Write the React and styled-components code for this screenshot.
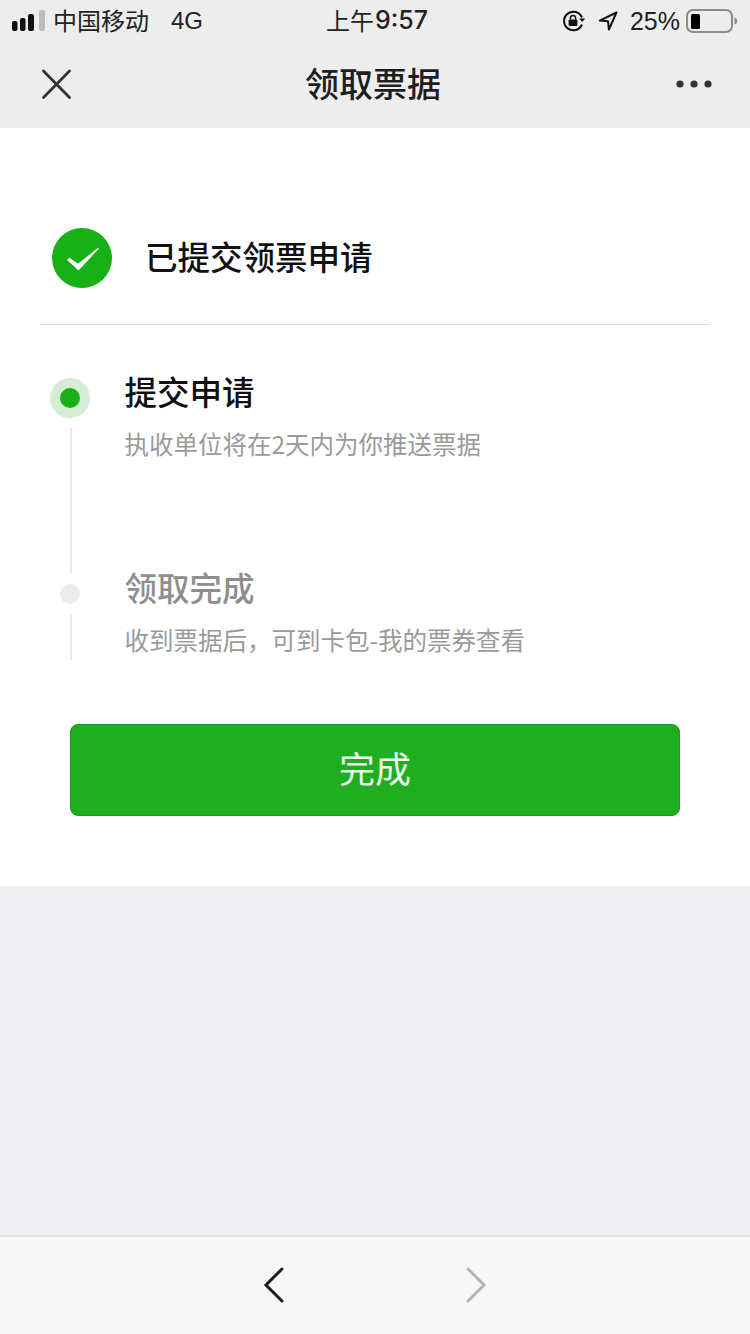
import React from "react";
import styled, { createGlobalStyle } from "styled-components";

const LATIN_FIRST = `"Liberation Sans", "Noto Sans CJK SC", sans-serif`;
const CJK = `"Noto Sans CJK SC", "Liberation Sans", sans-serif`;

const GlobalStyle = createGlobalStyle`
  html, body {
    margin: 0;
    padding: 0;
    background: #efeff1;
    font-family: ${CJK};
  }
`;

const Page = styled.div`
  width: 750px;
  height: 1334px;
  display: flex;
  flex-direction: column;
  overflow: hidden;
`;

const Header = styled.header`
  height: 128px;
  flex: none;
  background: #ededed;
`;

const StatusBar = styled.div`
  height: 42px;
  padding: 0 7px 0 12px;
  display: grid;
  grid-template-columns: 1fr auto 1fr;
  align-items: center;
  color: #222;
  font-size: 24px;
  line-height: 42px;
`;

const StatusLeft = styled.div`
  display: flex;
  align-items: center;
`;

const Carrier = styled.span`
  margin-left: 7px;
  padding-bottom: 2px;
  line-height: 34px;
`;

const Network = styled.span`
  margin-left: 22px;
  font-family: ${LATIN_FIRST};
`;

const Time = styled.div`
  display: flex;
  align-items: center;
  line-height: 36px;
  padding-bottom: 2px;
  margin-left: -1px;
`;

const Clock = styled.span`
  font-family: Inter, "Liberation Sans", sans-serif;
  font-size: 25px;
  font-weight: 500;
  margin-left: 1px;
`;

const StatusRight = styled.div`
  display: flex;
  align-items: center;
  justify-content: flex-end;
  padding-right: 5px;
`;

const Percent = styled.span`
  font-family: ${LATIN_FIRST};
  font-size: 25px;
  margin: 0 6px 0 12px;
`;

const ArrowSvg = styled.svg`
  margin-left: 12px;
`;

const NavBar = styled.div`
  height: 86px;
  padding: 0 36px 0 32px;
  display: grid;
  grid-template-columns: 1fr auto 1fr;
  align-items: center;
`;

const NavTitle = styled.h1`
  margin: 0;
  padding-bottom: 4px;
  font-size: 34px;
  line-height: 44px;
  font-weight: 500;
  color: #1e1e1e;
`;

const NavEnd = styled.div`
  display: flex;
  justify-content: ${(p) => (p.$right ? "flex-end" : "flex-start")};
`;

const Content = styled.main`
  flex: none;
  background: #fff;
  padding: 100px 40px 70px;
`;

const Result = styled.div`
  display: flex;
  align-items: center;
  height: 60px;
  padding-left: 12px;
  padding-bottom: 36px;
  border-bottom: 1px solid #d9d9d9;
`;

const ResultText = styled.h2`
  margin: 0 0 4px 33px;
  font-size: 32.5px;
  line-height: 58px;
  font-weight: 500;
  color: #111;
`;

const Steps = styled.ol`
  list-style: none;
  margin: 53px 0 0;
  padding: 0 0 0 10px;
`;

const Step = styled.li`
  display: flex;
`;

const Rail = styled.div`
  width: 40px;
  flex: none;
  display: flex;
  flex-direction: column;
  align-items: center;
`;

const Marker = styled.span`
  width: 40px;
  height: 40px;
  flex: none;
  display: flex;
  align-items: center;
  justify-content: center;
  border-radius: 50%;
  background: ${(p) => (p.$active ? "#d5edd5" : "transparent")};

  &::after {
    content: "";
    width: 20px;
    height: 20px;
    border-radius: 50%;
    background: ${(p) => (p.$active ? "#17b017" : "#ececec")};
  }
`;

const RailLine = styled.span`
  width: 2px;
  height: ${(p) => p.$height}px;
  margin-top: ${(p) => p.$gap}px;
  margin-bottom: ${(p) => p.$after}px;
  margin-left: 2px;
  background: #e4ebe6;
`;

const StepBody = styled.div`
  margin-left: 34.5px;
`;

const StepTitle = styled.h3`
  margin: 0;
  font-size: 32.5px;
  line-height: 26px;
  font-weight: 500;
  color: ${(p) => (p.$active ? "#111" : "#8e8e8e")};
`;

const StepDesc = styled.p`
  margin: 23px 0 0;
  font-size: 24.5px;
  line-height: 34px;
  color: #9a9a9a;
`;

const DoneButton = styled.button`
  display: block;
  width: 610px;
  height: 92px;
  margin: 64px 0 0 30px;
  padding: 0 0 6px;
  background: #1fae1f;
  border: 1px solid #1b9a1b;
  border-radius: 8px;
  color: #eef9ee;
  font-family: ${CJK};
  font-size: 36px;
`;

const Filler = styled.div`
  flex: 1;
  background: #efeff1;
`;

const BottomBar = styled.nav`
  height: 99px;
  flex: none;
  box-sizing: border-box;
  background: #f7f7f7;
  border-top: 2px solid #dedede;
  padding-bottom: 2px;
  display: flex;
  align-items: center;
  justify-content: center;
  gap: 178px;
`;

// status bar drawings
const Signal = () => (
  <svg width="34" height="22" viewBox="0 0 34 22">
    <rect x="0" y="11" width="5.5" height="10" rx="2" fill="#111" />
    <rect x="8" y="8" width="5.5" height="13" rx="2" fill="#111" />
    <rect x="16" y="4" width="6" height="17" rx="2" fill="#111" />
    <rect x="27" y="0" width="6" height="21" rx="2" fill="#bcbcbc" />
  </svg>
);

const RotationLock = () => (
  <svg width="24" height="22" viewBox="0 0 24 22">
    <path d="M20 14.5A9.3 9.3 0 1 1 20 7.5" fill="none" stroke="#111" strokeWidth="2" />
    <path d="M17.2 8.5h6l-3 3.6z" fill="#111" />
    <rect x="6.6" y="9.5" width="8.8" height="6.5" rx="1" fill="#111" />
    <path d="M8.4 9.5V8a2.6 2.6 0 0 1 5.2 0v1.5" fill="none" stroke="#111" strokeWidth="1.5" />
  </svg>
);

const LocationArrow = () => (
  <ArrowSvg width="20" height="20" viewBox="0 0 20 20">
    <path d="M18.5 1.5 1.8 9.6l8.2.6.9 8.3z" fill="none" stroke="#111" strokeWidth="2" strokeLinejoin="round" />
  </ArrowSvg>
);

const Battery = () => (
  <svg width="52" height="24" viewBox="0 0 52 24">
    <rect x="1" y="1" width="45" height="22" rx="6" fill="none" stroke="#8a8a8a" strokeWidth="2" />
    <rect x="5" y="5" width="9" height="15" rx="1.5" fill="#000" />
    <path d="M48.5 8.5c1.8.4 2.8 1.8 2.8 3.5s-1 3.1-2.8 3.5z" fill="#8a8a8a" />
  </svg>
);

const CloseIcon = () => (
  <svg width="48" height="48" viewBox="0 0 48 48">
    <path d="M11.5 10 37.5 36.5M37.5 10 11.5 36.5" stroke="#333" strokeWidth="2.8" strokeLinecap="round" />
  </svg>
);

const MoreIcon = () => (
  <svg width="48" height="48" viewBox="0 0 48 48">
    <circle cx="14" cy="23" r="3.6" fill="#333" />
    <circle cx="28" cy="23" r="3.6" fill="#333" />
    <circle cx="42" cy="23" r="3.6" fill="#333" />
  </svg>
);

const SuccessIcon = () => (
  <svg width="60" height="60" viewBox="0 0 60 60">
    <circle cx="30" cy="30" r="30" fill="#17b017" />
    <path d="M15 32 17.2 29.6 26 35.8 46 19.800 46.800 20.800 26.500 42.500z" fill="#f4fbf4" />
  </svg>
);

const Chevron = ({ flip, color }) => (
  <svg width="24" height="36" viewBox="0 0 24 36">
    <path
      d={flip ? "M4 2 20 18 4 34" : "M20 2 4 18 20 34"}
      fill="none"
      stroke={color}
      strokeWidth="3"
      strokeLinecap="round"
      strokeLinejoin="miter"
    />
  </svg>
);

export default function App() {
  return (
    <Page>
      <GlobalStyle />
      <Header>
        <StatusBar>
          <StatusLeft>
            <Signal />
            <Carrier>中国移动</Carrier>
            <Network>4G</Network>
          </StatusLeft>
          <Time>
            上午<Clock>9:57</Clock>
          </Time>
          <StatusRight>
            <RotationLock />
            <LocationArrow />
            <Percent>25%</Percent>
            <Battery />
          </StatusRight>
        </StatusBar>
        <NavBar>
          <NavEnd>
            <CloseIcon />
          </NavEnd>
          <NavTitle>领取票据</NavTitle>
          <NavEnd $right>
            <MoreIcon />
          </NavEnd>
        </NavBar>
      </Header>

      <Content>
        <Result>
          <SuccessIcon />
          <ResultText>已提交领票申请</ResultText>
        </Result>

        <Steps>
          <Step>
            <Rail>
              <Marker $active />
              <RailLine $gap={10} $height={145} $after={1} />
            </Rail>
            <StepBody>
              <StepTitle $active>提交申请</StepTitle>
              <StepDesc>执收单位将在2天内为你推送票据</StepDesc>
            </StepBody>
          </Step>
          <Step>
            <Rail>
              <Marker />
              <RailLine $gap={0} $height={46} $after={0} />
            </Rail>
            <StepBody>
              <StepTitle>领取完成</StepTitle>
              <StepDesc>收到票据后，可到卡包-我的票券查看</StepDesc>
            </StepBody>
          </Step>
        </Steps>

        <DoneButton>完成</DoneButton>
      </Content>

      <Filler />

      <BottomBar>
        <Chevron color="#1c1c1c" />
        <Chevron flip color="#b4b4b4" />
      </BottomBar>
    </Page>
  );
}
